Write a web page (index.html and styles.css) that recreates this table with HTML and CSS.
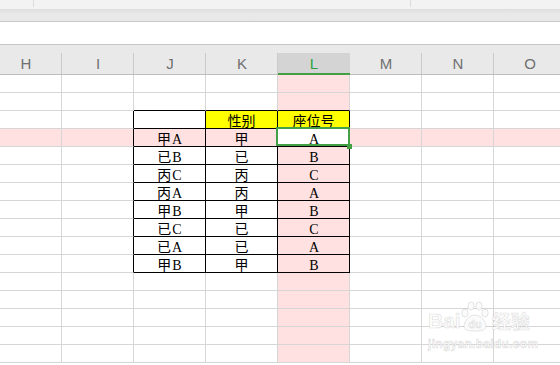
FILE: index.html
```html
<!DOCTYPE html>
<html lang="zh-CN">
<head>
  <meta charset="UTF-8" />
  <meta name="viewport" content="width=device-width, initial-scale=1.0"/>
  <title>座位号</title>
  <link rel="stylesheet" href="styles.css">
</head>
<body>

  <!-- ribbon remains above the sheet -->
  <div class="toolbar"><span class="g1"></span><span class="g2"></span></div>
  <div class="ribbon-edge"></div>
  <div class="formula-bar"></div>

  <!-- column headers + cells, filled in below -->
  <div class="sheet" id="sheet"></div>

  <div class="watermark">
    <div class="wm-logo">
      <span>Bai</span>
      <svg class="paw" width="32" height="32" viewBox="0 0 32 32">
        <ellipse cx="6" cy="13" rx="3.2" ry="4"/>
        <ellipse cx="12" cy="6" rx="3.2" ry="4"/>
        <ellipse cx="20" cy="6" rx="3.2" ry="4"/>
        <ellipse cx="26" cy="13" rx="3.2" ry="4"/>
        <path d="M16 15 C10 15 5 22 5 26 C5 30 9 31 16 31 C23 31 27 30 27 26 C27 22 22 15 16 15 Z"/>
        <text x="16" y="28" text-anchor="middle">du</text>
      </svg>
      <span class="wm-cn">经验</span>
    </div>
    <div class="wm-url">jingyan.baidu.com</div>
  </div>

  <script>
    const cols = ["H", "I", "J", "K", "L", "M", "N", "O"];
    const table = [
      ["", "性别", "座位号"],
      ["甲A", "甲", "A"],
      ["已B", "已", "B"],
      ["丙C", "丙", "C"],
      ["丙A", "丙", "A"],
      ["甲B", "甲", "B"],
      ["已C", "已", "C"],
      ["已A", "已", "A"],
      ["甲B", "甲", "B"]
    ];
    const TOP = 3;        // sheet row of the table header
    const FIRST = 2;      // column J
    const LAST = 4;       // column L
    const ROWS = 16;
    const activeRow = 4;
    const activeCol = "L";

    const sheet = document.getElementById("sheet");

    cols.forEach(c => {
      const hd = document.createElement("div");
      hd.className = "hd" + (c === activeCol ? " sel" : "");
      hd.textContent = c;
      sheet.appendChild(hd);
    });

    function fill(cell, text) {
      // latin letters use the narrower font
      cell.innerHTML = text.replace(/([A-Z])/g, '<span class="lat">$1</span>');
    }

    for (let r = 1; r <= ROWS; r++) {
      const t = r - TOP;
      const tableRow = t >= 0 && t < table.length;
      cols.forEach((c, i) => {
        const cell = document.createElement("div");
        cell.className = "c";
        if (r === activeRow || c === activeCol) cell.classList.add("hl");

        if (tableRow && i >= FIRST && i <= LAST) {
          cell.classList.add("bt", "br");
          if (t === 0 && i > FIRST) cell.classList.add("yel");
          fill(cell, table[t][i - FIRST]);
        }
        if (r === TOP - 1 && i >= FIRST && i <= LAST) cell.classList.add("bt");
        if (tableRow && i === FIRST - 1) cell.classList.add("br");
        if (r === activeRow && c === activeCol) cell.classList.add("active");

        sheet.appendChild(cell);
      });
    }
  </script>

</body>
</html>
```

FILE: styles.css
```css
* { box-sizing: border-box; margin: 0; padding: 0; }
body {
  width: 560px;
  height: 365px;
  overflow: hidden;
  position: relative;
  background: #fff;
  font-family: "Liberation Sans", sans-serif;
}

/* ribbon */
.toolbar { height: 9px; background: #f3f3f3; display: flex; }
.toolbar span { height: 7px; border-right: 1px solid #dcdcdc; }
.toolbar .g1 { width: 34px; }
.toolbar .g2 { width: 377px; }
.ribbon-edge {
  height: 13px;
  background: linear-gradient(#dedede, #e9e9e9 40%, #e8e8e8);
  border-bottom: 1px solid #c9c9c9;
}
.formula-bar { height: 23px; background: #fff; border-bottom: 1px solid #c6c6c6; }

/* grid */
.sheet {
  margin-left: -10px;
  display: grid;
  grid-template-columns: repeat(8, 72px);
}
.hd {
  height: 30px;
  padding-top: 8px;
  display: flex;
  align-items: center;
  justify-content: center;
  font-size: 15px;
  color: #707070;
  border-bottom: 1px solid #bdbdbd;
  background: linear-gradient(#cacaca, #cacaca) right bottom / 1px 21px no-repeat, #e9e9e9;
}
.hd.sel {
  color: #2aa043;
  border-bottom: 2px solid #45a045;
  background: linear-gradient(#e9e9e9 8px, #d4d4d4 8px);
}
.c {
  height: 18px;
  overflow: hidden;
  text-align: center;
  white-space: nowrap;
  border-right: 1px solid #d6d6d6;
  border-bottom: 1px solid #d6d6d6;
  font-family: "Noto Sans CJK SC", sans-serif;
  font-size: 14px;
  line-height: 18px;
  color: #000;
}
.c .lat {
  font-family: "Liberation Serif", serif;
  font-size: 14px;
  line-height: 1;
  margin-left: 1px;
}
.c.hl { background: #ffe1e1; }
.c.yel { background: #ffff00; }
.c.bt { border-bottom-color: #000; }
.c.br { border-right-color: #000; }
.c.active { position: relative; overflow: visible; background: #fff; }
.c.active::after {
  content: "";
  position: absolute;
  left: -2px;
  top: -2px;
  right: -1px;
  bottom: 0;
  border: 2px solid #45a045;
}
.c.active::before {
  content: "";
  position: absolute;
  right: -3px;
  bottom: -3px;
  width: 5px;
  height: 5px;
  background: #45a045;
  z-index: 1;
}

/* faint watermark in the corner */
.watermark {
  position: absolute;
  left: 428px;
  top: 300px;
  text-align: center;
  color: #fbfbfb;
  -webkit-text-stroke: 1px rgba(0, 0, 0, 0.1);
}
.wm-logo {
  display: flex;
  align-items: flex-end;
  font-size: 21px;
  font-weight: bold;
  line-height: 24px;
}
.wm-cn { font-family: "Noto Sans CJK SC", sans-serif; font-size: 19px; }
.paw { fill: #fbfbfb; stroke: rgba(0, 0, 0, 0.1); stroke-width: 1; margin: 0 1px 1px -2px; }
.paw text { font-family: "Liberation Sans", sans-serif; font-size: 11px; font-weight: bold; }
.wm-url { margin-top: 4px; font-size: 12px; font-weight: bold; letter-spacing: 0.3px; }
```
